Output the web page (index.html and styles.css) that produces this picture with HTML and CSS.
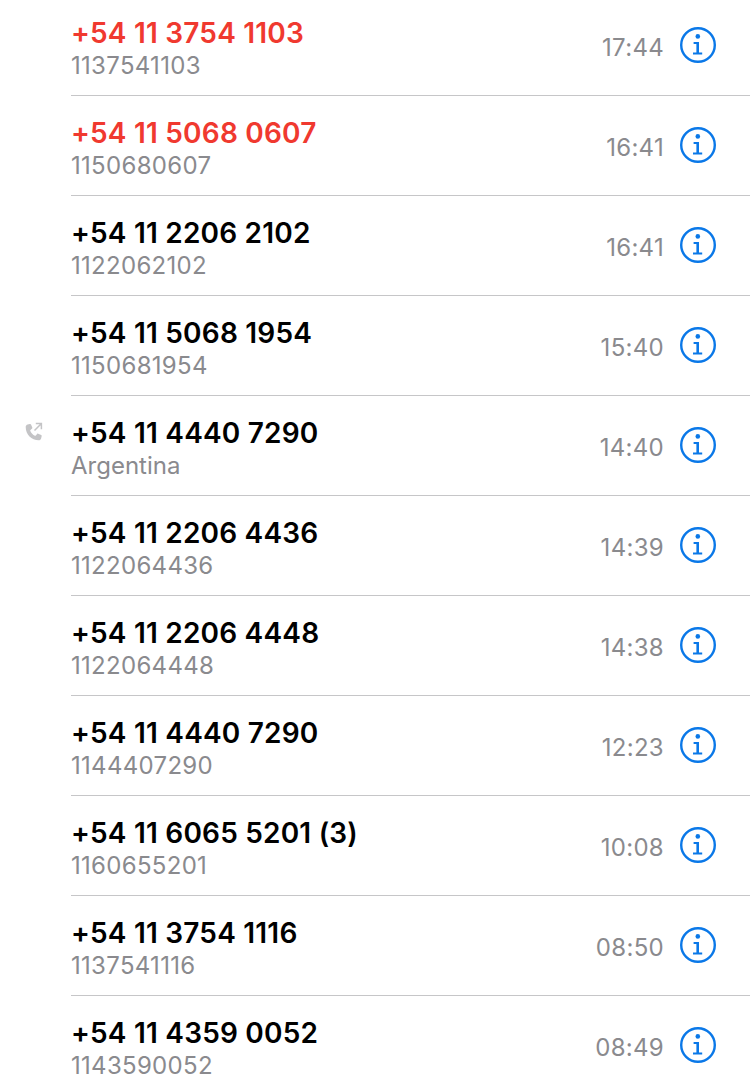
FILE: index.html
```html
<!DOCTYPE html>
<html lang="es">

<head>
    <meta charset="UTF-8">
    <meta name="viewport" content="width=device-width, initial-scale=1.0">
    <title>Recientes</title>
    <link rel="stylesheet" href="styles.css">
</head>

<body>

    <svg class="sprite" width="0" height="0">
        <symbol id="info" viewBox="0 0 36 36">
            <circle cx="18" cy="18" r="16.8" fill="none" stroke="currentColor" stroke-width="2.4" />
            <circle cx="17.800" cy="9.400" r="2.300" fill="currentColor" />
            <path d="M13.600 15h5.400v10.400h3.200v2H13v-2h3.400v-8.400h-2.800z" fill="currentColor" />
        </symbol>
    </svg>

    <ul class="calls">
        <li class="call missed">
            <div class="who"><span class="number">+54 11 3754 1103</span><span class="detail">1137541103</span></div>
            <span class="time">17:44</span>
            <svg class="info"><use href="#info" /></svg>
        </li>
        <li class="call missed">
            <div class="who"><span class="number">+54 11 5068 0607</span><span class="detail">1150680607</span></div>
            <span class="time">16:41</span>
            <svg class="info"><use href="#info" /></svg>
        </li>
        <li class="call">
            <div class="who"><span class="number">+54 11 2206 2102</span><span class="detail">1122062102</span></div>
            <span class="time">16:41</span>
            <svg class="info"><use href="#info" /></svg>
        </li>
        <li class="call">
            <div class="who"><span class="number">+54 11 5068 1954</span><span class="detail">1150681954</span></div>
            <span class="time">15:40</span>
            <svg class="info"><use href="#info" /></svg>
        </li>
        <li class="call">
            <!-- llamada saliente -->
            <svg class="outgoing" viewBox="0 0 20 20">
                <path d="M4.600 2.600 6.900 2c.5-.1.9.1 1.100.5l1.300 3c.2.4.1.8-.2 1.100L7.500 8c-.3.2-.4.500-.2.900.9 2 2.600 3.800 4.600 4.800.4.200.7.100.9-.2l1.300-1.600c.3-.3.700-.4 1.100-.2l3 1.400c.4.200.6.600.5 1l-.6 2.400c-.3 1.100-1.200 1.800-2.300 1.800C8.500 18.300 2.700 12.300 2.700 5c0-1.100.8-2.100 1.900-2.400z" fill="currentColor" />
                <path d="M11.500 8.500 18.200 1.800M12.800 1.600h5.600v5.600" fill="none" stroke="currentColor" stroke-width="1.500" />
            </svg>
            <div class="who"><span class="number">+54 11 4440 7290</span><span class="detail place">Argentina</span></div>
            <span class="time">14:40</span>
            <svg class="info"><use href="#info" /></svg>
        </li>
        <li class="call">
            <div class="who"><span class="number">+54 11 2206 4436</span><span class="detail">1122064436</span></div>
            <span class="time">14:39</span>
            <svg class="info"><use href="#info" /></svg>
        </li>
        <li class="call">
            <div class="who"><span class="number">+54 11 2206 4448</span><span class="detail">1122064448</span></div>
            <span class="time">14:38</span>
            <svg class="info"><use href="#info" /></svg>
        </li>
        <li class="call">
            <div class="who"><span class="number">+54 11 4440 7290</span><span class="detail">1144407290</span></div>
            <span class="time">12:23</span>
            <svg class="info"><use href="#info" /></svg>
        </li>
        <li class="call">
            <div class="who"><span class="number">+54 11 6065 5201 (3)</span><span class="detail">1160655201</span></div>
            <span class="time">10:08</span>
            <svg class="info"><use href="#info" /></svg>
        </li>
        <li class="call">
            <div class="who"><span class="number">+54 11 3754 1116</span><span class="detail">1137541116</span></div>
            <span class="time">08:50</span>
            <svg class="info"><use href="#info" /></svg>
        </li>
        <li class="call">
            <div class="who"><span class="number">+54 11 4359 0052</span><span class="detail">1143590052</span></div>
            <span class="time">08:49</span>
            <svg class="info"><use href="#info" /></svg>
        </li>
    </ul>

</body>

</html>
```

FILE: styles.css
```css
/* Estilos gerais */
html, body {
    height: 1083px;
    overflow: hidden;
}

body {
    font-family: Inter, "Liberation Sans", sans-serif;
    background-color: #fff;
    margin: 0;
}

.sprite {
    display: block;
}

/* Lista de llamadas */
.calls {
    list-style: none;
    margin: -4px 0 0 71px;
    padding: 0;
}

.call {
    position: relative;
    display: flex;
    align-items: center;
    box-sizing: border-box;
    height: 100px;
    border-bottom: 1px solid #c6c6c8;
}

.who {
    flex: 1;
    display: flex;
    flex-direction: column;
    margin-top: 5px;
}

.number {
    font-size: 28px;
    line-height: 34px;
    font-weight: 600;
    letter-spacing: 0.2px;
    color: #000;
}

.detail {
    font-size: 24px;
    line-height: 31px;
    letter-spacing: 0.3px;
    color: #8a8a8e;
}

.place {
    letter-spacing: 0;
}

.time {
    font-size: 24px;
    letter-spacing: 0.3px;
    color: #8a8a8e;
    margin-right: 16px;
    margin-top: 4px;
}

.info {
    width: 36px;
    height: 36px;
    margin-right: 34px;
    margin-top: -2px;
    color: #0a78e8;
}

.missed .number {
    color: #f0392f;
}

/* Icono sobre el margen izquierdo */
.outgoing {
    position: absolute;
    left: -48px;
    top: 26px;
    width: 20px;
    height: 20px;
    color: #c4c4c6;
}
```
